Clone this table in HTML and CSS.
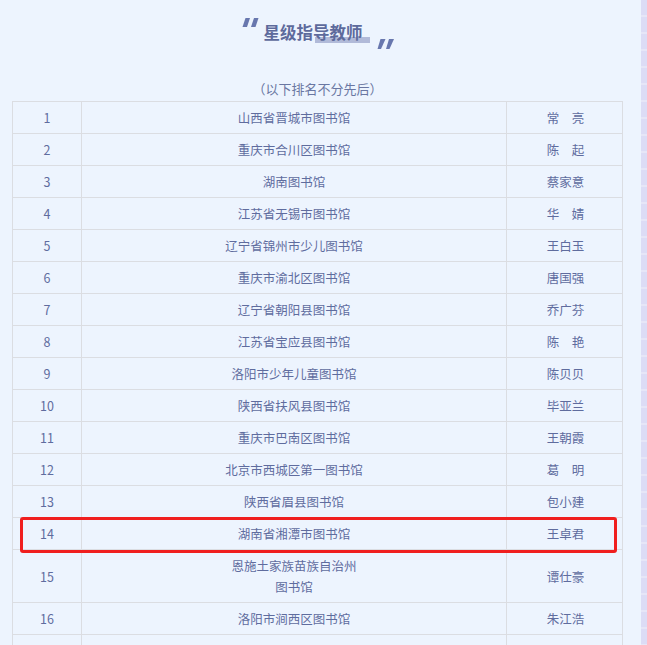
FILE: index.html
```html
<!DOCTYPE html>
<html lang="zh">
<head>
<meta charset="utf-8">
<link rel="stylesheet" href="styles.css">
</head>
<body>
<div class="page">
  <div class="head">
    <div class="title-row">
      <svg class="quote quote-l" width="17" height="9" viewBox="0 0 17 9"><polygon points="3.5,0 8,0 5,9 0.5,9"/><polygon points="12,0 16.5,0 13.5,9 9,9"/></svg>
      <h1 class="title">星级指导教师</h1>
      <svg class="quote quote-r" width="17" height="10" viewBox="0 0 17 10"><polygon points="3.5,0 8.5,0 4,10 0.5,10"/><polygon points="12,0 17,0 12.5,10 9,10"/></svg>
    </div>
    <p class="sub">（以下排名不分先后）</p>
  </div>
  <table class="list">
    <colgroup><col class="c1"><col class="c2"><col class="c3"></colgroup>
    <tbody>
      <tr><td>1</td><td>山西省晋城市图书馆</td><td>常　亮</td></tr>
      <tr><td>2</td><td>重庆市合川区图书馆</td><td>陈　起</td></tr>
      <tr><td>3</td><td>湖南图书馆</td><td>蔡家意</td></tr>
      <tr><td>4</td><td>江苏省无锡市图书馆</td><td>华　婧</td></tr>
      <tr><td>5</td><td>辽宁省锦州市少儿图书馆</td><td>王白玉</td></tr>
      <tr><td>6</td><td>重庆市渝北区图书馆</td><td>唐国强</td></tr>
      <tr><td>7</td><td>辽宁省朝阳县图书馆</td><td>乔广芬</td></tr>
      <tr><td>8</td><td>江苏省宝应县图书馆</td><td>陈　艳</td></tr>
      <tr><td>9</td><td>洛阳市少年儿童图书馆</td><td>陈贝贝</td></tr>
      <tr><td>10</td><td>陕西省扶风县图书馆</td><td>毕亚兰</td></tr>
      <tr><td>11</td><td>重庆市巴南区图书馆</td><td>王朝霞</td></tr>
      <tr><td>12</td><td>北京市西城区第一图书馆</td><td>葛　明</td></tr>
      <tr><td>13</td><td>陕西省眉县图书馆</td><td>包小建</td></tr>
      <tr class="mark"><td>14</td><td>湖南省湘潭市图书馆</td><td>王卓君</td></tr>
      <tr><td>15</td><td>恩施土家族苗族自治州<br>图书馆</td><td>谭仕豪</td></tr>
      <tr><td>16</td><td>洛阳市涧西区图书馆</td><td>朱江浩</td></tr>
      <tr><td></td><td></td><td></td></tr>
    </tbody>
  </table>
  <div class="edge"></div>
</div>
</body>
</html>
```

FILE: styles.css
```css
html, body {
  margin: 0;
  padding: 0;
  background: #edf4fe;
  overflow: hidden;
}
.page {
  position: relative;
  width: 647px;
  height: 645px;
  font-family: "Noto Sans CJK SC", "Noto Sans", sans-serif;
  color: #5f6c9e;
}
.head {
  width: 611px;
  margin-left: 12px;
  height: 101px;
  display: flex;
  flex-direction: column;
  align-items: center;
}
.title-row {
  display: flex;
  align-items: flex-start;
  height: 60px;
  margin-top: 10px;
}
.quote {
  fill: #6877ae;
  flex: none;
}
.quote-l { margin-top: 8px; margin-right: 5px; }
.quote-r { margin-top: 29px; margin-left: 14px; }
.title {
  position: relative;
  z-index: 0;
  margin: 10px 0 0 0;
  font-size: 16.5px;
  line-height: 24px;
  font-weight: bold;
  color: #5d6a9c;
}
.title::before {
  content: "";
  position: absolute;
  left: 51px;
  top: 17px;
  width: 55px;
  height: 6px;
  background: #b1bad9;
  z-index: -1;
}
.sub {
  margin: 10px 0 0 0;
  font-size: 13px;
  line-height: 18px;
  color: #6a77a2;
}
.list {
  margin-left: 12px;
  width: 610px;
  border-collapse: collapse;
  table-layout: fixed;
  font-size: 12.5px;
}
.c1 { width: 69px; }
.c2 { width: 425px; }
.c3 { width: 116px; }
.list td {
  border: 1px solid #dbdde2;
  text-align: center;
  padding: 5px 0;
  line-height: 21px;
  height: 21px;
  color: #5f6c9e;
}
.list td:last-child { padding-left: 2px; }
.mark td:first-child { position: relative; }
.mark td:first-child::after {
  content: "";
  position: absolute;
  left: 7px;
  top: -1px;
  width: 591px;
  height: 30px;
  border: 3px solid #f01e1e;
  border-radius: 3px;
}
.edge {
  position: absolute;
  right: 0;
  top: 0;
  width: 6px;
  height: 645px;
  background: repeating-linear-gradient(to bottom, #dcdcf6 0, #dcdcf6 15px, #e6e6f8 15px, #e6e6f8 17px);
}
```
